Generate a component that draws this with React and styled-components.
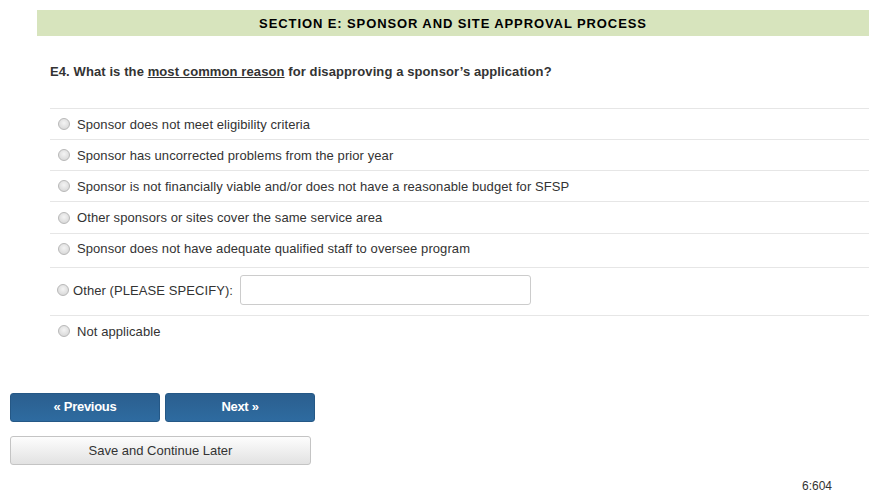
import React from 'react';
import styled, { createGlobalStyle } from 'styled-components';

const GlobalStyle = createGlobalStyle`
  body {
    margin: 0;
    background: #fff;
    font-family: "Liberation Sans", Arial, sans-serif;
    color: #333;
  }
`;

const Page = styled.div`
  width: 878px;
  height: 499px;
  padding-top: 10px;
  box-sizing: border-box;
`;

const SectionHeader = styled.div`
  margin: 0 9px 0 37px;
  height: 26px;
  background: #d7e4bd;
  display: flex;
  align-items: center;
  justify-content: center;
  font-size: 13px;
  font-weight: bold;
  color: #000;
  letter-spacing: 0.9px;
`;

const Question = styled.div`
  margin: 28px 0 0 50px;
  font-size: 13px;
  font-weight: bold;
  color: #333;
  letter-spacing: 0.1px;

  u {
    text-decoration: underline;
  }
`;

const Options = styled.div`
  margin: 29px 9px 0 50px;
`;

const Row = styled.label`
  display: flex;
  align-items: center;
  height: ${p => p.$h || 31}px;
  border-top: 1px solid #e6e6e6;
  padding-left: ${p => p.$pad ?? 8}px;
  padding-bottom: ${p => p.$lift ?? 0}px;
  font-size: 13px;
  color: #333;
  letter-spacing: 0.08px;
  box-sizing: border-box;
`;

const Radio = styled.span`
  width: 10px;
  height: 10px;
  border-radius: 50%;
  border: 1px solid #b8b8b8;
  background: radial-gradient(circle at 50% 40%, #f4f4f4 0%, #dcdcdc 70%, #cfcfcf 100%);
  margin-right: ${p => p.$gap ?? 7}px;
  flex-shrink: 0;
`;

const SpecifyInput = styled.input`
  margin-left: 7px;
  width: 291px;
  height: 30px;
  box-sizing: border-box;
  border: 1px solid #ccc;
  border-radius: 3px;
  font-size: 13px;
`;

const Buttons = styled.div`
  margin: 47px 0 0 10px;
  display: flex;
  flex-direction: column;
  gap: 14px;
`;

const NavRow = styled.div`
  display: flex;
  gap: 5px;
`;

const NavButton = styled.button`
  width: 150px;
  height: 29px;
  border: 1px solid #255886;
  border-radius: 3px;
  background: linear-gradient(#2b5f8f, #2e6ba0);
  color: #fff;
  font-family: "Liberation Sans", Arial, sans-serif;
  font-size: 13px;
  font-weight: bold;
  letter-spacing: -0.3px;
  padding: 0 0 2px;
`;

const SaveButton = styled.button`
  width: 301px;
  height: 29px;
  border: 1px solid #c4c4c4;
  border-radius: 3px;
  background: linear-gradient(#fdfdfd, #e2e2e2);
  color: #333;
  font-family: "Liberation Sans", Arial, sans-serif;
  font-size: 13px;
  padding: 0;
`;

const Footer = styled.div`
  margin: 14px 46px 0 0;
  text-align: right;
  font-size: 12px;
  color: #333;
`;

const choices = [
  ['Sponsor does not meet eligibility criteria', 31, 0],
  ['Sponsor has uncorrected problems from the prior year', 31, 0],
  ['Sponsor is not financially viable and/or does not have a reasonable budget for SFSP', 31, 0],
  ['Other sponsors or sites cover the same service area', 32, 0],
  ['Sponsor does not have adequate qualified staff to oversee program', 34, 4],
];

export default function App() {
  return (
    <Page>
      <GlobalStyle />
      <SectionHeader>SECTION E: SPONSOR AND SITE APPROVAL PROCESS</SectionHeader>
      <Question>
        E4. What is the <u>most common reason</u> for disapproving a sponsor’s application?
      </Question>
      <Options>
        {choices.map(([c, h, lift]) => (
          <Row key={c} $h={h} $lift={lift}>
            <Radio />
            {c}
          </Row>
        ))}
        <Row $h={48} $pad={7} $lift={3}>
          <Radio $gap={4} />
          Other (PLEASE SPECIFY):
          <SpecifyInput type="text" />
        </Row>
        <Row $h={31}>
          <Radio />
          Not applicable
        </Row>
      </Options>
      <Buttons>
        <NavRow>
          <NavButton>« Previous</NavButton>
          <NavButton>Next »</NavButton>
        </NavRow>
        <SaveButton>Save and Continue Later</SaveButton>
      </Buttons>
      <Footer>6:604</Footer>
    </Page>
  );
}
